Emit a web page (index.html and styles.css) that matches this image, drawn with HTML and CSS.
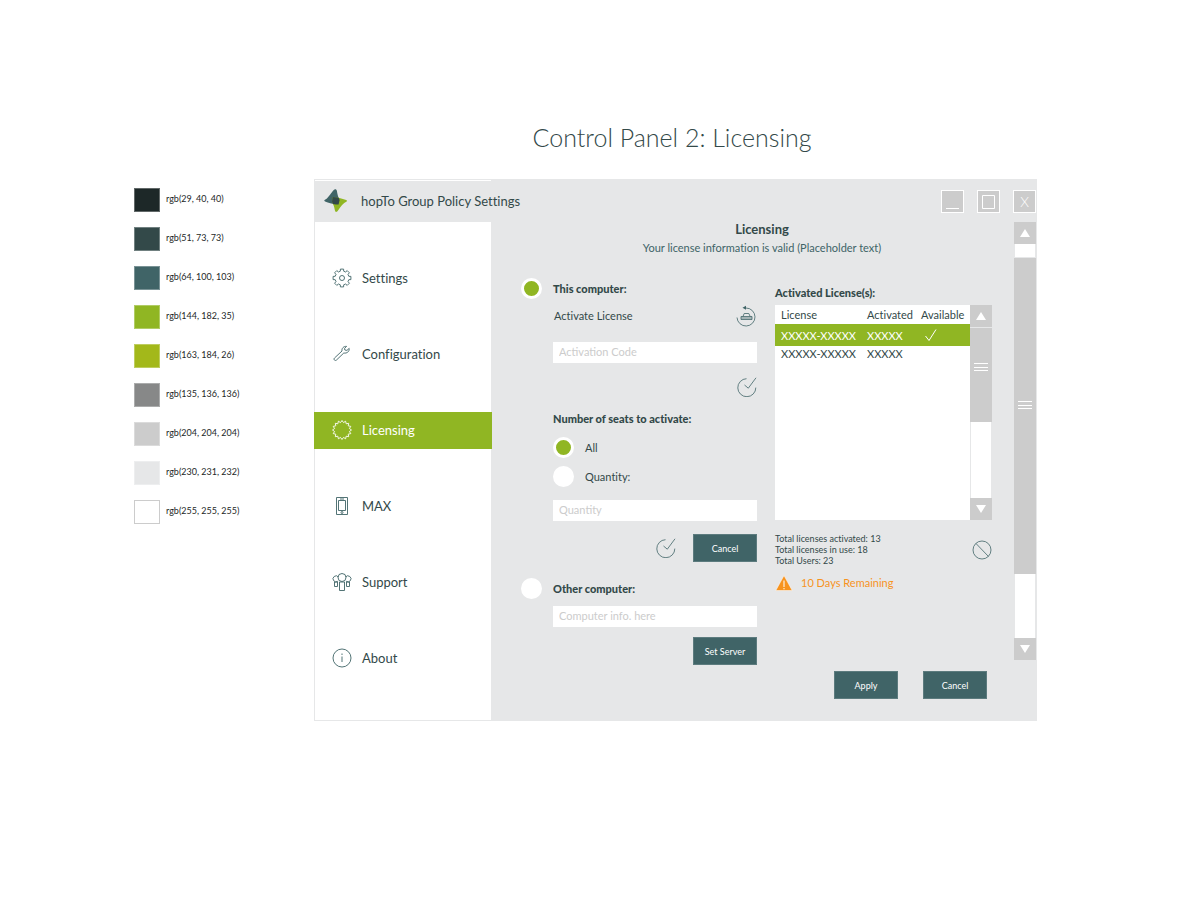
FILE: index.html
```html
<!DOCTYPE html>
<html lang="en">
<head>
  <meta charset="UTF-8">
  <meta name="viewport" content="width=device-width, initial-scale=1.0">
  <title>Control Panel 2: Licensing</title>

  <link rel="stylesheet" href="styles.css">

</head>
<body>
  <!-- shared icons -->
  <svg class="defs" aria-hidden="true">
    <symbol id="check-circle" viewBox="0 0 20 20">
      <path d="M9.5 1.7A9 9 0 1 0 18.8 10.6M7.5 8L11.3 11.2L19 0.8"/>
    </symbol>
    <symbol id="grip" viewBox="0 0 14 10">
      <path d="M0 1.5H14M0 5.5H14M0 8.5H14"/>
    </symbol>
  </svg>

  <div class="page">
    <h1>Control Panel 2: Licensing</h1>

    <ul class="palette">
      <li><span class="swatch ink"></span>rgb(29, 40, 40)</li>
      <li><span class="swatch slate"></span>rgb(51, 73, 73)</li>
      <li><span class="swatch teal"></span>rgb(64, 100, 103)</li>
      <li><span class="swatch green"></span>rgb(144, 182, 35)</li>
      <li><span class="swatch lime"></span>rgb(163, 184, 26)</li>
      <li><span class="swatch gray"></span>rgb(135, 136, 136)</li>
      <li><span class="swatch silver"></span>rgb(204, 204, 204)</li>
      <li><span class="swatch light"></span>rgb(230, 231, 232)</li>
      <li><span class="swatch white"></span>rgb(255, 255, 255)</li>
    </ul>

    <div class="window">
      <div class="titlebar">
        <div class="brand">
          <svg class="logo" viewBox="0 0 24 24">
            <path fill="#406467" d="M.6 11C4 9.5 6 5 9.5 1.2C11 -.3 12.6 .2 12.9 2C13.4 5 14 8 15.6 11L14.6 15.5C10 15.5 4 13.6 1.1 12.5Q-.2 11.8 .6 11Z"/>
            <path fill="#90b623" d="M22.7 12.6C19 14.5 17 17 14 21.5C12.5 23.8 11.2 23.2 10.8 21C10.3 18 9.5 15.5 8 13L8.5 8C13 8.2 18 9.5 22.2 11Q23.6 11.6 22.7 12.6Z"/>
            <path fill="#334949" d="M8.5 8Q12 8.1 14.7 8.8L15.6 11L14.6 15.5Q12 15.4 9 14.9L8 13Z"/>
          </svg>
          <span>hopTo Group Policy Settings</span>
        </div>
        <div class="controls">
          <button type="button" aria-label="Minimize"><svg viewBox="0 0 21 21"><path d="M4 17.5H17"/></svg></button>
          <button type="button" aria-label="Maximize"><svg viewBox="0 0 21 21"><path d="M4.500 4.500H16.500V17.500H4.500Z"/></svg></button>
          <button type="button">X</button>
        </div>
      </div>

      <div class="body">
        <nav class="menu">
          <a href="#settings">
            <svg viewBox="0 0 20 20">
              <path d="M8.300 3.200L8.400 1.100H11.600L11.700 3.200L13.600 4L15.200 2.600L17.400 4.800L16 6.400L16.800 8.300L18.900 8.400V11.600L16.800 11.700L16 13.600L17.400 15.200L15.200 17.400L13.600 16L11.700 16.800L11.600 18.900H8.400L8.300 16.800L6.400 16L4.800 17.400L2.600 15.200L4 13.600L3.200 11.700L1.100 11.600V8.400L3.200 8.300L4 6.400L2.600 4.800L4.800 2.600L6.400 4Z"/>
              <circle cx="10" cy="10" r="2.500"/>
            </svg>
            Settings
          </a>
          <a href="#configuration">
            <svg viewBox="0 0 20 20">
              <path d="M14.600 2.400C11.800 2 9.400 4.400 10 7L2.500 14C1.200 15.400 3 17.400 4.500 16L11.800 9C14.800 9.600 17.600 7.600 17.200 4.400L14.900 6.400L12.800 6L12.600 4.300Z"/>
            </svg>
            Configuration
          </a>
          <a href="#licensing" class="active">
            <svg viewBox="0 0 20 20">
              <path d="M10 .5L11.500 2.600L13.600 1.200L14.200 3.800L16.700 3.300L16.200 5.800L18.800 6.400L17.400 8.500L19.500 10L17.400 11.500L18.800 13.600L16.200 14.200L16.700 16.700L14.200 16.200L13.600 18.800L11.500 17.400L10 19.500L8.500 17.400L6.400 18.800L5.800 16.200L3.300 16.700L3.800 14.200L1.200 13.600L2.600 11.500L.5 10L2.600 8.500L1.200 6.400L3.800 5.800L3.300 3.300L5.800 3.800L6.400 1.200L8.500 2.600Z"/>
            </svg>
            Licensing
          </a>
          <a href="#max">
            <svg viewBox="0 0 20 20">
              <path d="M4.500 1.500H15.500V18.500H4.500ZM6.500 4.500H13.500V14.500H6.500ZM8 3H12"/>
              <circle cx="10" cy="16.500" r="1"/>
            </svg>
            MAX
          </a>
          <a href="#support">
            <svg viewBox="0 0 20 20">
              <circle cx="10" cy="5.500" r="4"/>
              <path d="M7.500 10H12.500V18.500H7.500ZM6.400 5A3 3 0 1 0 5.800 9.300M13.600 5A3 3 0 1 1 14.200 9.300M2.500 10H5.500V14.500H2.500ZM14.500 10H17.500V14.500H14.500Z"/>
            </svg>
            Support
          </a>
          <a href="#about">
            <svg viewBox="0 0 20 20">
              <circle cx="10" cy="10" r="9"/>
              <path d="M10 8.500V14M10 5.500V7"/>
            </svg>
            About
          </a>
        </nav>

        <form class="main">
          <header>
            <h2>Licensing</h2>
            <p>Your license information is valid (Placeholder text)</p>
          </header>

          <div class="columns">
            <div class="left">
              <label class="choice strong"><input type="radio" name="computer" checked>This computer:</label>
              <div class="indent">
                <div class="activate">
                  <label for="code">Activate License</label>
                  <button type="button" class="icon-btn" aria-label="Restore">
                    <svg viewBox="0 0 22 22">
                      <path d="M2 12.500A9 9 0 1 0 11 3M8 11.500L9.200 8.500H13.800L15.200 11.500M6 11.500H17V14.500H6ZM6 13H17"/>
                      <path class="solid" d="M7.500 2.800L11 .8V4.800Z"/>
                    </svg>
                  </button>
                </div>
                <input type="text" id="code" placeholder="Activation Code">
                <div class="row confirm">
                  <button type="button" class="icon-btn" aria-label="Activate"><svg><use href="#check-circle"/></svg></button>
                </div>
                <fieldset>
                  <legend>Number of seats to activate:</legend>
                  <label class="choice"><input type="radio" name="seats" checked>All</label>
                  <label class="choice"><input type="radio" name="seats">Quantity:</label>
                  <input type="text" placeholder="Quantity" aria-label="Quantity">
                </fieldset>
                <div class="row">
                  <button type="button" class="icon-btn" aria-label="Confirm seats"><svg><use href="#check-circle"/></svg></button>
                  <button type="button" class="btn">Cancel</button>
                </div>
              </div>

              <label class="choice strong other"><input type="radio" name="computer">Other computer:</label>
              <div class="indent">
                <input type="text" placeholder="Computer info. here" aria-label="Computer info">
                <div class="row server">
                  <button type="button" class="btn">Set Server</button>
                </div>
              </div>
            </div>

            <div class="right">
              <h3>Activated License(s):</h3>
              <div class="list">
                <div class="list-area">
                  <table>
                    <thead>
                      <tr><th class="wide">License</th><th class="mid">Activated</th><th>Available</th></tr>
                    </thead>
                    <tbody>
                      <tr class="selected">
                        <td>XXXXX-XXXXX</td>
                        <td>XXXXX</td>
                        <td><svg class="tick" viewBox="0 0 12 12"><path d="M.5 7L4 11.500L11 .5"/></svg></td>
                      </tr>
                      <tr><td>XXXXX-XXXXX</td><td>XXXXX</td><td></td></tr>
                    </tbody>
                  </table>
                </div>
                <div class="scroll">
                  <button type="button" aria-label="Scroll list up"><svg viewBox="0 0 10 8"><path d="M5 0L10 8H0Z"/></svg></button>
                  <div class="thumb"><svg class="grip"><use href="#grip"/></svg></div>
                  <div class="track"></div>
                  <button type="button" aria-label="Scroll list down"><svg viewBox="0 0 10 8"><path d="M0 0H10L5 8Z"/></svg></button>
                </div>
              </div>
              <div class="totals">
                <p>Total licenses activated: 13<br>Total licenses in use: 18<br>Total Users: 23</p>
                <button type="button" class="icon-btn" aria-label="Deactivate">
                  <svg viewBox="0 0 20 20"><circle cx="10" cy="10" r="9"/><path d="M4 3.500L16.500 16.500"/></svg>
                </button>
              </div>
              <p class="warning">
                <svg viewBox="0 0 18 16"><path fill="#f7931e" stroke="#fff" stroke-width=".5" d="M9 .5L17.200 15.500H.8Z"/><path stroke="#fff" d="M9 5.500V12M9 13V14.300"/></svg>
                10 Days Remaining
              </p>
            </div>
          </div>

          <footer>
            <button type="button" class="btn">Apply</button>
            <button type="button" class="btn">Cancel</button>
          </footer>
        </form>

        <div class="scroll page-scroll">
          <button type="button" aria-label="Scroll up"><svg viewBox="0 0 10 8"><path d="M5 0L10 8H0Z"/></svg></button>
          <div class="track before"></div>
          <div class="thumb"><svg class="grip"><use href="#grip"/></svg></div>
          <div class="track"></div>
          <button type="button" aria-label="Scroll down"><svg viewBox="0 0 10 8"><path d="M0 0H10L5 8Z"/></svg></button>
        </div>
      </div>
    </div>
  </div>
</body>
</html>
```

FILE: styles.css
```css
*{
  box-sizing: border-box;
}

body{
  margin: 0;
  background-color: #ffffff;
  color: #334949;
  font-family: Lato, "Liberation Sans", sans-serif;
  font-size: 11px;
  font-variant-ligatures: none;
  line-height: 16px;
}

h1, h2, h3, p, ul{
  margin: 0;
  padding: 0;
}

button, input{
  font-family: inherit;
  margin: 0;
}

svg{
  display: block;
  flex: none;
  fill: none;
}

.defs{
  position: absolute;
  width: 0;
  height: 0;
}

.page{
  display: grid;
  grid-template-columns: 180px 1fr;
  padding: 121px 163px 0 134px;
}

h1{
  grid-column: 2;
  margin-bottom: 26px;
  padding-right: 7px;
  font-size: 25px;
  font-weight: 300;
  line-height: 32px;
  text-align: center;
}

/* colour list */
.palette{
  display: flex;
  flex-direction: column;
  gap: 15px;
  padding-top: 9px;
  list-style-type: none;
  color: #1d2828;
  font-size: 9px;
}

.palette li{
  display: flex;
  gap: 6px;
  height: 24px;
  line-height: 22px;
}

.swatch{
  width: 26px;
  height: 24px;
  border: 1px solid rgba(255, 255, 255, 0.3);
}

.ink{ background-color: #1d2828; }
.slate{ background-color: #334949; }
.teal{ background-color: #406467; }
.green{ background-color: #90b623; }
.lime{ background-color: #a3b81a; }
.gray{ background-color: #878888; }
.silver{ background-color: #cccccc; }
.light{ background-color: #e6e7e8; }
.white{ background-color: #ffffff; border-color: #cccccc; }

/* window */
.window{
  border: 1px solid #e6e7e8;
  background-color: #e6e7e8;
}

.titlebar{
  display: flex;
  justify-content: space-between;
  align-items: center;
  height: 42px;
}

.brand{
  display: flex;
  align-items: center;
  gap: 13px;
  width: 176px;
  height: 42px;
  padding-left: 9px;
  padding-bottom: 2px;
  border-top: 1px solid #ffffff;
  font-size: 13px;
  white-space: nowrap;
}

.logo{
  width: 24px;
  height: 24px;
}

.controls{
  display: flex;
  gap: 13px;
}

.controls button{
  width: 23px;
  height: 23px;
  padding: 0;
  border: 1px solid #ffffff;
  background-color: #cccccc;
  color: #ffffff;
  font-size: 14px;
  font-weight: 300;
  line-height: 21px;
}

.controls svg{
  stroke: #ffffff;
}

.body{
  display: grid;
  grid-template-columns: 176px 1fr 22px;
}

.menu{
  display: flex;
  flex-direction: column;
  gap: 39px;
  padding: 38px 0 43px;
  background-color: #ffffff;
}

.menu a{
  display: flex;
  align-items: center;
  gap: 10px;
  height: 37px;
  margin: 0 -1px;
  padding-left: 18px;
  padding-bottom: 2px;
  color: #334949;
  font-size: 13px;
  text-decoration: none;
}

.menu svg{
  width: 20px;
  height: 20px;
  stroke: #406467;
  stroke-width: 0.9;
}

.menu .active{
  background-color: #90b623;
  color: #ffffff;
}

.menu .active svg{
  stroke: #ffffff;
}

/* content */
.main{
  padding: 0 22px 21px 30px;
}

header{
  padding-left: 11px;
  text-align: center;
}

h2{
  font-size: 13px;
  line-height: 14px;
}

header p{
  margin-top: 4px;
  color: #406467;
}

.columns{
  display: grid;
  grid-template-columns: 236fr 217fr;
  gap: 18px;
  margin-top: 22px;
}

.choice{
  display: flex;
  align-items: center;
  gap: 11px;
  height: 21px;
}

.strong, legend, h3{
  font-size: 11px;
  font-weight: 900;
}

input[type="radio"]{
  appearance: none;
  width: 21px;
  height: 21px;
  border: 3px solid #ffffff;
  border-radius: 50%;
  background-color: #ffffff;
}

input[type="radio"]:checked{
  background-color: #90b623;
}

.indent{
  padding-left: 32px;
}

input[type="text"]{
  display: block;
  width: 100%;
  height: 21px;
  padding: 0 6px 2px;
  border: 0;
  background-color: #ffffff;
  color: #334949;
  font-size: 11px;
}

input::placeholder{
  color: #cccccc;
}

.activate{
  display: flex;
  justify-content: space-between;
  align-items: center;
  margin: 6px 0 15px;
  padding-left: 1px;
}

.icon-btn{
  padding: 0;
  border: 0;
  background: none;
}

.icon-btn svg{
  width: 20px;
  height: 20px;
  stroke: #406467;
  stroke-width: 0.8;
}

.activate .icon-btn svg{
  width: 22px;
  height: 22px;
}

.icon-btn .solid{
  fill: #406467;
  stroke: none;
}

.row{
  display: flex;
  justify-content: flex-end;
  align-items: center;
  gap: 17px;
  margin-top: 13px;
}

.confirm{
  margin: 14px 0;
}

fieldset{
  margin: 0;
  padding: 0;
  border: 0;
}

legend{
  margin-bottom: 10px;
  padding: 0;
}

fieldset .choice{
  margin-bottom: 8px;
}

fieldset input[type="text"]{
  margin-top: 13px;
}

.btn{
  width: 64px;
  height: 28px;
  padding: 0;
  border: 1px solid #5c7b7e;
  background-color: #406467;
  color: #ffffff;
  font-size: 9px;
}

.other{
  margin: 16px 0 7px;
}

.server{
  margin-top: 10px;
}

/* license list */
h3{
  margin: 7px 0 4px;
}

.list{
  display: grid;
  grid-template-columns: 1fr 22px;
  height: 215px;
  background-color: #ffffff;
}

table{
  width: 100%;
  border-collapse: collapse;
  table-layout: fixed;
}

th, td{
  padding: 0 0 0 6px;
  font-weight: 400;
  line-height: 15px;
  text-align: left;
}

th{
  height: 19px;
}

.wide{
  width: 86px;
}

.mid{
  width: 54px;
}

.selected td{
  height: 22px;
  background-color: #90b623;
  color: #ffffff;
}

.tick{
  width: 12px;
  height: 12px;
  margin-left: 4px;
  stroke: #ffffff;
}

.scroll{
  display: flex;
  flex-direction: column;
}

.scroll button{
  display: flex;
  justify-content: center;
  align-items: center;
  width: 22px;
  height: 22px;
  padding: 0;
  border: 0;
  background-color: #cccccc;
}

.scroll button svg{
  width: 10px;
  height: 8px;
  fill: #ffffff;
}

.thumb{
  display: flex;
  flex: 95;
  justify-content: center;
  align-items: center;
  border-top: 1px solid #e6e7e8;
  background-color: #cccccc;
}

.grip{
  width: 14px;
  height: 10px;
  margin-bottom: 16px;
  stroke: #ffffff;
}

.track{
  flex: 76;
  border: solid #e6e7e8;
  border-width: 0 1px;
  background-color: #ffffff;
}

.page-scroll{
  margin-bottom: 60px;
}

.page-scroll .before{
  flex: 13;
}

.page-scroll .thumb{
  flex: 318;
}

.page-scroll .grip{
  margin-bottom: 22px;
}

.page-scroll .track:not(.before){
  flex: 65;
}

.totals{
  display: flex;
  justify-content: space-between;
  align-items: center;
  margin: 13px 0 9px;
  font-size: 9px;
  line-height: 11px;
}

.warning{
  display: flex;
  gap: 8px;
  color: #f7931e;
}

.warning svg{
  width: 18px;
  height: 16px;
}

footer{
  display: flex;
  justify-content: flex-end;
  gap: 25px;
  margin-top: 6px;
  padding-right: 5px;
}
```
